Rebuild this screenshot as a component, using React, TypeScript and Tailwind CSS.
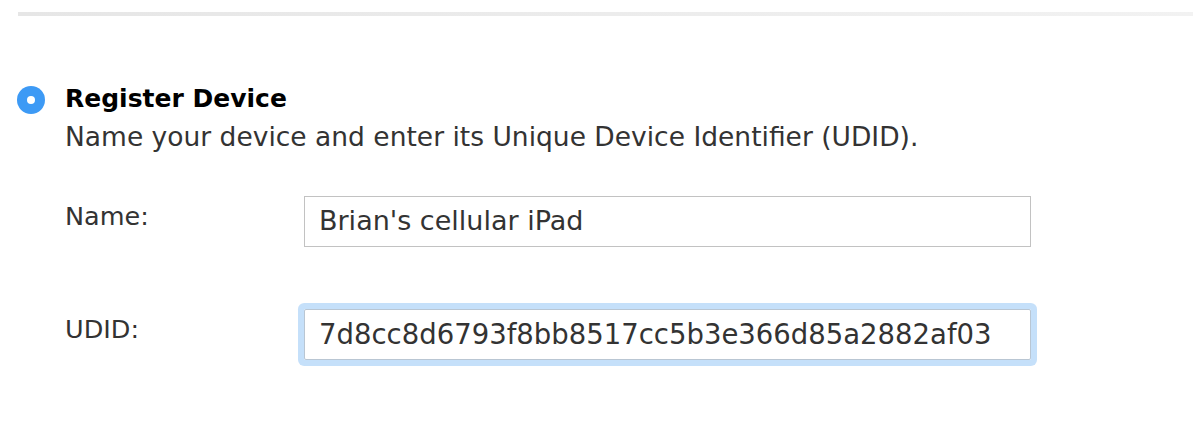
import React from 'react';

const font = { fontFamily: '"DejaVu Sans", "Liberation Sans", sans-serif' };

export default function App() {
  return (
    <div className="w-[1194px] h-[440px] bg-white overflow-hidden" style={font}>
      {/* top divider */}
      <div className="pt-[12px] pl-[18px] pr-[1px]">
        <div className="h-[4px] bg-gradient-to-r from-[#e6e6e6] to-[#f2f2f2]" />
      </div>

      <div className="mt-[65px] pl-[17px] flex items-start gap-[20px]">
        {/* radio */}
        <div className="mt-[5px] w-[28px] h-[28px] rounded-full bg-[#3d9af5] flex items-center justify-center shrink-0">
          <div className="w-[8px] h-[8px] rounded-full bg-white" />
        </div>

        <div className="flex-1">
          <h2 className="text-[25px] leading-[36px] font-bold text-black">Register Device</h2>
          <p className="mt-[2px] text-[26.5px] leading-[36px] text-[#333333]">
            Name your device and enter its Unique Device Identifier (UDID).
          </p>

          <div className="mt-[41px] grid grid-cols-[239px_727px] gap-y-[62px] items-start">
            <label className="text-[25.5px] leading-[30px] text-[#333333] pt-[5px]">Name:</label>
            <div className="h-[51px] border border-[#c2c2c2] flex items-center pl-[14px] text-[27px] text-[#333333]">
              Brian's cellular iPad
            </div>

            <label className="text-[25.5px] leading-[30px] text-[#333333] pt-[5px]">UDID:</label>
            <div className="h-[51px] border border-[#b9c6d3] ring-[6px] ring-[#c5e0fa] rounded-[2px] flex items-center pl-[14px] text-[27.5px] text-[#333333]">
              7d8cc8d6793f8bb8517cc5b3e366d85a2882af03
            </div>
          </div>
        </div>
      </div>
    </div>
  );
}
